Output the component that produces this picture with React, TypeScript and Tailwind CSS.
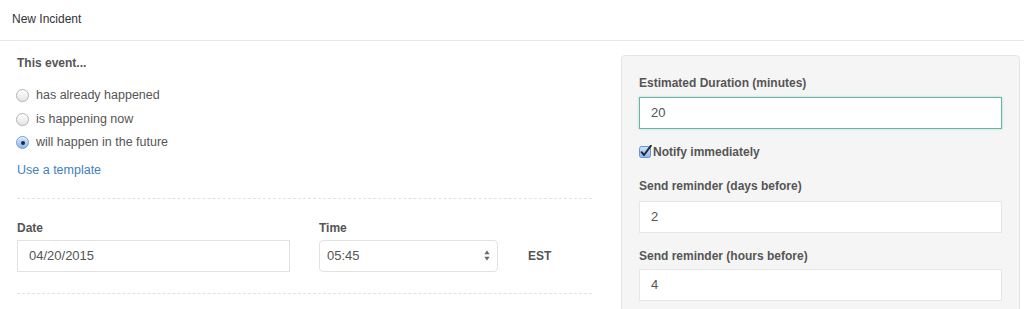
import React, { useState } from 'react';

const font = { fontFamily: '"Helvetica Neue", "Liberation Sans", Arial, sans-serif' };

function Radio({ checked }: { checked: boolean }) {
  if (checked) {
    return (
      <span className="flex h-[13px] w-[13px] shrink-0 items-center justify-center rounded-full border border-[#6f9bd3] bg-gradient-to-b from-[#cfe3fb] to-[#8fb9ec] shadow-[inset_0_1px_1px_rgba(255,255,255,0.8)]">
        <span className="h-[4px] w-[4px] rounded-full bg-[#1d2a3a]" />
      </span>
    );
  }
  return (
    <span className="block h-[13px] w-[13px] shrink-0 rounded-full border border-[#b4b4b4] bg-gradient-to-b from-[#ffffff] to-[#e3e3e3] shadow-[0_1px_0_rgba(0,0,0,0.04)]" />
  );
}

function Checkbox() {
  return (
    <svg width="13" height="13" viewBox="0 0 13 13" className="shrink-0">
      <defs>
        <linearGradient id="cb" x1="0" y1="0" x2="0" y2="1">
          <stop offset="0" stopColor="#d3e5fb" />
          <stop offset="1" stopColor="#8db6ea" />
        </linearGradient>
      </defs>
      <rect x="0.5" y="1.5" width="11" height="11" rx="2" fill="url(#cb)" stroke="#6a93c9" />
      <path d="M2.6 7.2 L5 10 L11.8 0.8" fill="none" stroke="#1c2b44" strokeWidth="2" strokeLinecap="round" strokeLinejoin="round" />
    </svg>
  );
}

export default function NewIncident() {
  const [timing, setTiming] = useState('future');
  const options = [
    { id: 'past', label: 'has already happened' },
    { id: 'now', label: 'is happening now' },
    { id: 'future', label: 'will happen in the future' },
  ];

  return (
    <div className="h-[309px] w-[1024px] overflow-hidden bg-white text-[#555]" style={font}>
      <div className="flex h-[41px] items-center border-b border-[#e6e6e6] px-[12px] pb-[2px] text-[12px] text-[#333]">
        New Incident
      </div>

      <div className="flex pl-[17px]">
        {/* left column */}
        <div className="w-[575px] pt-[14px]">
          <div className="text-[12px] font-bold leading-[17px]">This event...</div>
          <div className="mt-[12px]">
            {options.map((o) => (
              <label
                key={o.id}
                onClick={() => setTiming(o.id)}
                className="flex h-[23.5px] cursor-pointer items-center text-[12.5px]"
              >
                <span className="ml-[-1px] flex">
                  <Radio checked={timing === o.id} />
                </span>
                <span className="ml-[7px]">{o.label}</span>
              </label>
            ))}
          </div>
          <a className="mt-[7px] block text-[12.5px] leading-[17px] text-[#3f7fc0]">Use a template</a>

          <div className="mt-[19px] border-t border-dashed border-[#e2e2e2]" />

          <div className="mt-[21px] flex items-end">
            <div className="w-[273px]">
              <div className="mb-[3px] text-[12px] font-bold leading-[17px]">Date</div>
              <div className="flex h-[32px] items-center border border-[#e2e2e2] px-[11px] text-[13px]">04/20/2015</div>
            </div>
            <div className="ml-[29px] w-[179px]">
              <div className="mb-[3px] text-[12px] font-bold leading-[17px]">Time</div>
              <div className="flex h-[32px] items-center justify-between rounded-[4px] border border-[#e2e2e2] pl-[7px] pr-[7px] text-[13px]">
                <span>05:45</span>
                <svg width="6" height="11" viewBox="0 0 6 11">
                  <path d="M3 0.5 L5.6 4.2 H0.4 Z" fill="#666" />
                  <path d="M3 10.5 L5.6 6.8 H0.4 Z" fill="#666" />
                </svg>
              </div>
            </div>
            <div className="ml-[30px] flex h-[32px] items-center text-[12px] font-bold">EST</div>
          </div>

          <div className="mt-[21px] border-t border-dashed border-[#e2e2e2]" />
        </div>

        {/* right panel */}
        <div className="ml-[29px] mt-[14px] w-[399px] rounded-[4px] border border-[#e4e4e4] bg-[#f5f5f5] px-[17px] pt-[19px] pb-[20px]">
          <div className="text-[12px] font-bold leading-[17px]">Estimated Duration (minutes)</div>
          <div className="mt-[5px] flex h-[32px] items-center border border-[#62b7a5] bg-white px-[11px] text-[13px] shadow-[0_0_2px_rgba(98,183,165,0.5)]">
            20
          </div>

          <div className="mt-[14px] flex h-[17px] items-center text-[12px] font-bold">
            <Checkbox />
            <span className="ml-[1px]">Notify immediately</span>
          </div>

          <div className="mt-[18px] text-[12px] font-bold leading-[17px]">Send reminder (days before)</div>
          <div className="mt-[6px] flex h-[32px] items-center border border-[#e6e6e6] bg-white px-[11px] text-[13px]">2</div>

          <div className="mt-[15px] text-[12px] font-bold leading-[17px]">Send reminder (hours before)</div>
          <div className="mt-[4px] flex h-[32px] items-center border border-[#e6e6e6] bg-white px-[11px] text-[13px]">4</div>
        </div>
      </div>
    </div>
  );
}
